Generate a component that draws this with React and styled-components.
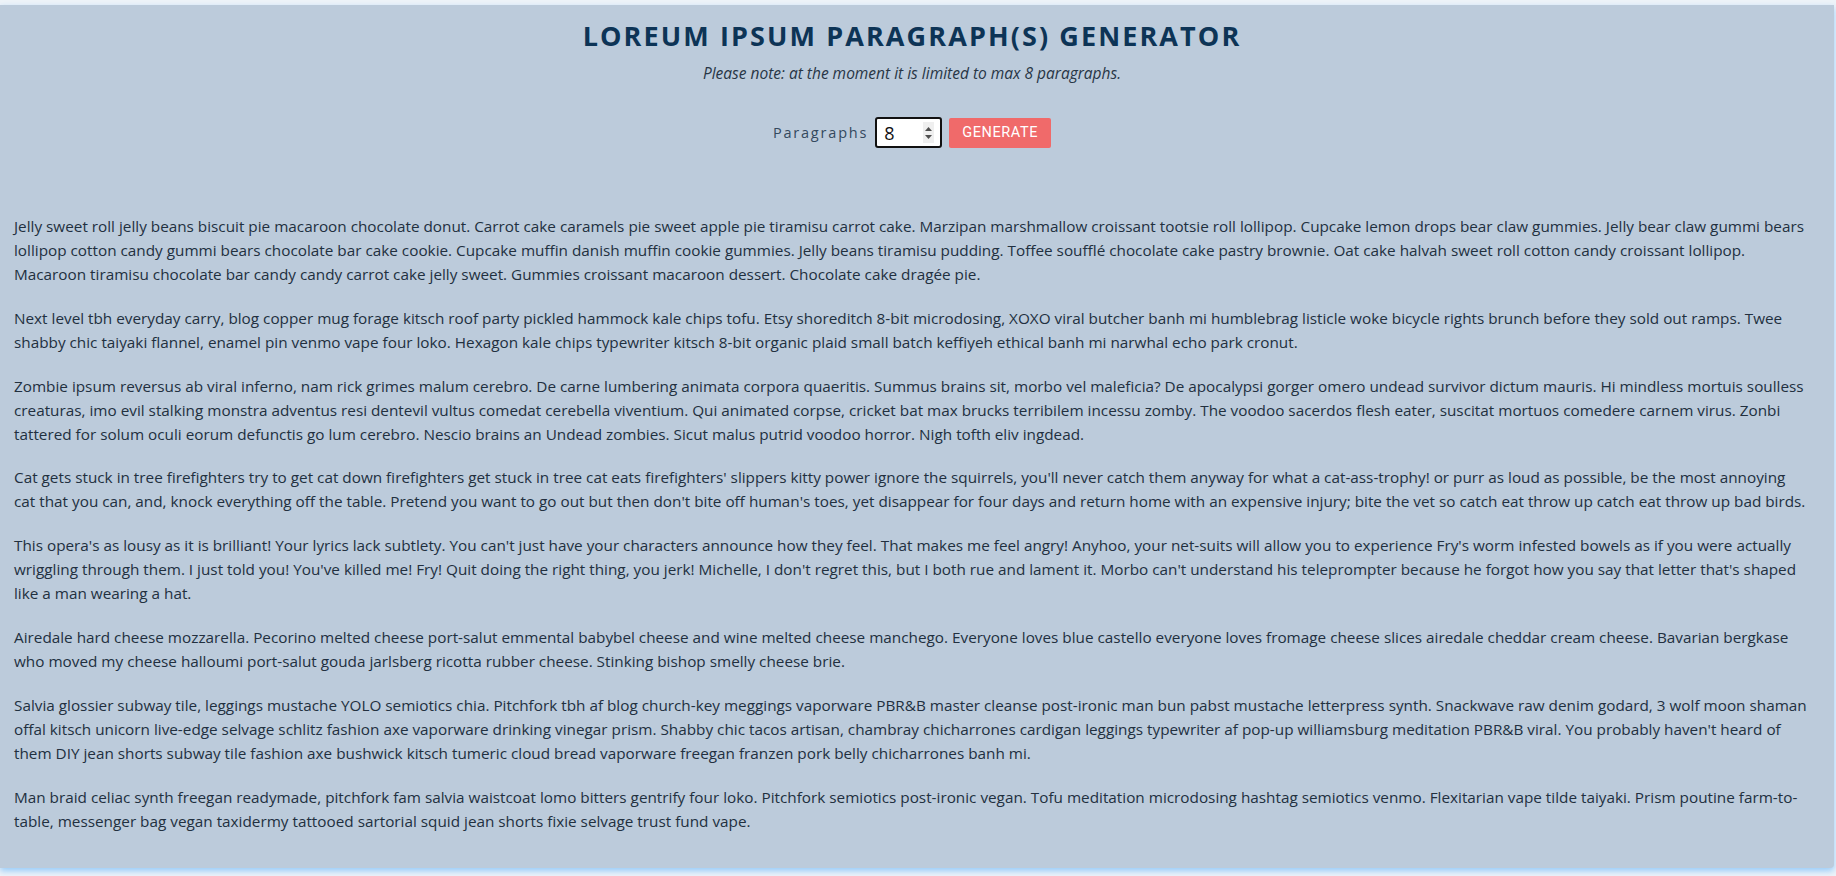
import React, { useState } from "react";
import styled, { createGlobalStyle } from "styled-components";

const paragraphs = [
  "Jelly sweet roll jelly beans biscuit pie macaroon chocolate donut. Carrot cake caramels pie sweet apple pie tiramisu carrot cake. Marzipan marshmallow croissant tootsie roll lollipop. Cupcake lemon drops bear claw gummies. Jelly bear claw gummi bears lollipop cotton candy gummi bears chocolate bar cake cookie. Cupcake muffin danish muffin cookie gummies. Jelly beans tiramisu pudding. Toffee soufflé chocolate cake pastry brownie. Oat cake halvah sweet roll cotton candy croissant lollipop. Macaroon tiramisu chocolate bar candy candy carrot cake jelly sweet. Gummies croissant macaroon dessert. Chocolate cake dragée pie.",
  "Next level tbh everyday carry, blog copper mug forage kitsch roof party pickled hammock kale chips tofu. Etsy shoreditch 8-bit microdosing, XOXO viral butcher banh mi humblebrag listicle woke bicycle rights brunch before they sold out ramps. Twee shabby chic taiyaki flannel, enamel pin venmo vape four loko. Hexagon kale chips typewriter kitsch 8-bit organic plaid small batch keffiyeh ethical banh mi narwhal echo park cronut.",
  "Zombie ipsum reversus ab viral inferno, nam rick grimes malum cerebro. De carne lumbering animata corpora quaeritis. Summus brains sit, morbo vel maleficia? De apocalypsi gorger omero undead survivor dictum mauris. Hi mindless mortuis soulless creaturas, imo evil stalking monstra adventus resi dentevil vultus comedat cerebella viventium. Qui animated corpse, cricket bat max brucks terribilem incessu zomby. The voodoo sacerdos flesh eater, suscitat mortuos comedere carnem virus. Zonbi tattered for solum oculi eorum defunctis go lum cerebro. Nescio brains an Undead zombies. Sicut malus putrid voodoo horror. Nigh tofth eliv ingdead.",
  "Cat gets stuck in tree firefighters try to get cat down firefighters get stuck in tree cat eats firefighters' slippers kitty power ignore the squirrels, you'll never catch them anyway for what a cat-ass-trophy! or purr as loud as possible, be the most annoying cat that you can, and, knock everything off the table. Pretend you want to go out but then don't bite off human's toes, yet disappear for four days and return home with an expensive injury; bite the vet so catch eat throw up catch eat throw up bad birds.",
  "This opera's as lousy as it is brilliant! Your lyrics lack subtlety. You can't just have your characters announce how they feel. That makes me feel angry! Anyhoo, your net-suits will allow you to experience Fry's worm infested bowels as if you were actually wriggling through them. I just told you! You've killed me! Fry! Quit doing the right thing, you jerk! Michelle, I don't regret this, but I both rue and lament it. Morbo can't understand his teleprompter because he forgot how you say that letter that's shaped like a man wearing a hat.",
  "Airedale hard cheese mozzarella. Pecorino melted cheese port-salut emmental babybel cheese and wine melted cheese manchego. Everyone loves blue castello everyone loves fromage cheese slices airedale cheddar cream cheese. Bavarian bergkase who moved my cheese halloumi port-salut gouda jarlsberg ricotta rubber cheese. Stinking bishop smelly cheese brie.",
  "Salvia glossier subway tile, leggings mustache YOLO semiotics chia. Pitchfork tbh af blog church-key meggings vaporware PBR&B master cleanse post-ironic man bun pabst mustache letterpress synth. Snackwave raw denim godard, 3 wolf moon shaman offal kitsch unicorn live-edge selvage schlitz fashion axe vaporware drinking vinegar prism. Shabby chic tacos artisan, chambray chicharrones cardigan leggings typewriter af pop-up williamsburg meditation PBR&B viral. You probably haven't heard of them DIY jean shorts subway tile fashion axe bushwick kitsch tumeric cloud bread vaporware freegan franzen pork belly chicharrones banh mi.",
  "Man braid celiac synth freegan readymade, pitchfork fam salvia waistcoat lomo bitters gentrify four loko. Pitchfork semiotics post-ironic vegan. Tofu meditation microdosing hashtag semiotics venmo. Flexitarian vape tilde taiyaki. Prism poutine farm-to-table, messenger bag vegan taxidermy tattooed sartorial squid jean shorts fixie selvage trust fund vape.",
];

const GlobalStyle = createGlobalStyle`
  html, body {
    margin: 0;
    padding: 0;
    background: #eef3f8;
    font-family: "Open Sans", "Noto Sans", sans-serif;
    overflow: hidden;
  }
`;

const App = () => {
  const [count, setCount] = useState(8);

  return (
    <>
      <GlobalStyle />
      <Page>
        <Card>
          <Header>
            <Title>Loreum Ipsum Paragraph(s) Generator</Title>
            <Note>Please note: at the moment it is limited to max 8 paragraphs.</Note>
            <Controls>
              <Label htmlFor="amount">Paragraphs</Label>
              <NumberBox>
                <NumberInput
                  id="amount"
                  value={count}
                  onChange={(e) => setCount(e.target.value)}
                />
                <Spinner>
                  <svg width="9" height="16" viewBox="0 0 9 16">
                    <path d="M1 6 L4.5 2 L8 6 Z" fill="#505050" />
                    <path d="M1 10 L4.5 14 L8 10 Z" fill="#505050" />
                  </svg>
                </Spinner>
              </NumberBox>
              <GenerateButton>Generate</GenerateButton>
            </Controls>
          </Header>

          <TextList>
            {paragraphs.slice(0, 8).map((text, i) => (
              <Paragraph key={i}>{text}</Paragraph>
            ))}
          </TextList>
        </Card>
      </Page>
    </>
  );
};

const Page = styled.div`
  padding: 5px 2px 0 0;
  height: 876px;
  box-sizing: border-box;
`;

const Card = styled.main`
  background: #bccbdb;
  height: 863px;
  box-sizing: border-box;
  padding: 13px 24px 0 14px;
  border-radius: 0 0 4px 0;
  box-shadow: 0 3px 6px rgba(120, 190, 250, 0.75);
`;

const Header = styled.header`
  display: flex;
  flex-direction: column;
  align-items: center;
`;

const Title = styled.h1`
  margin: 0;
  font-size: 27px;
  line-height: 36px;
  font-weight: 700;
  letter-spacing: 2.1px;
  text-transform: uppercase;
  color: #0d3456;
`;

const Note = styled.p`
  margin: 9px 0 0;
  font-size: 15.5px;
  line-height: 20px;
  font-style: italic;
  color: #283646;
`;

const Controls = styled.div`
  display: flex;
  align-items: center;
  gap: 7px;
  margin-top: 34px;
`;

const Label = styled.label`
  font-size: 14.5px;
  letter-spacing: 1.8px;
  color: #34495e;
`;

const NumberBox = styled.div`
  display: flex;
  align-items: center;
  width: 67px;
  height: 31px;
  box-sizing: border-box;
  border: 2px solid #111;
  border-radius: 3px;
  background: #fff;
  padding: 0 6px 0 7px;
`;

const NumberInput = styled.input`
  flex: 1;
  min-width: 0;
  border: none;
  outline: none;
  background: transparent;
  font-family: "Open Sans", sans-serif;
  font-size: 18px;
  color: #111;
  padding: 0;
`;

const Spinner = styled.span`
  display: flex;
  align-items: center;
  justify-content: center;
  width: 11px;
  height: 21px;
  background: #efefef;
`;

const GenerateButton = styled.button`
  height: 30px;
  padding: 0 13px;
  border: none;
  border-radius: 2px;
  background: #f06a6a;
  color: #fff;
  font-family: Roboto, "Liberation Sans", sans-serif;
  font-size: 14.5px;
  letter-spacing: 0.6px;
  text-transform: uppercase;
  cursor: pointer;
`;

const TextList = styled.section`
  display: flex;
  flex-direction: column;
  gap: 19.8px;
  margin-top: 66px;
`;

const Paragraph = styled.p`
  margin: 0;
  font-size: 15.3px;
  line-height: 24px;
  color: #22303f;
`;

export default App;
